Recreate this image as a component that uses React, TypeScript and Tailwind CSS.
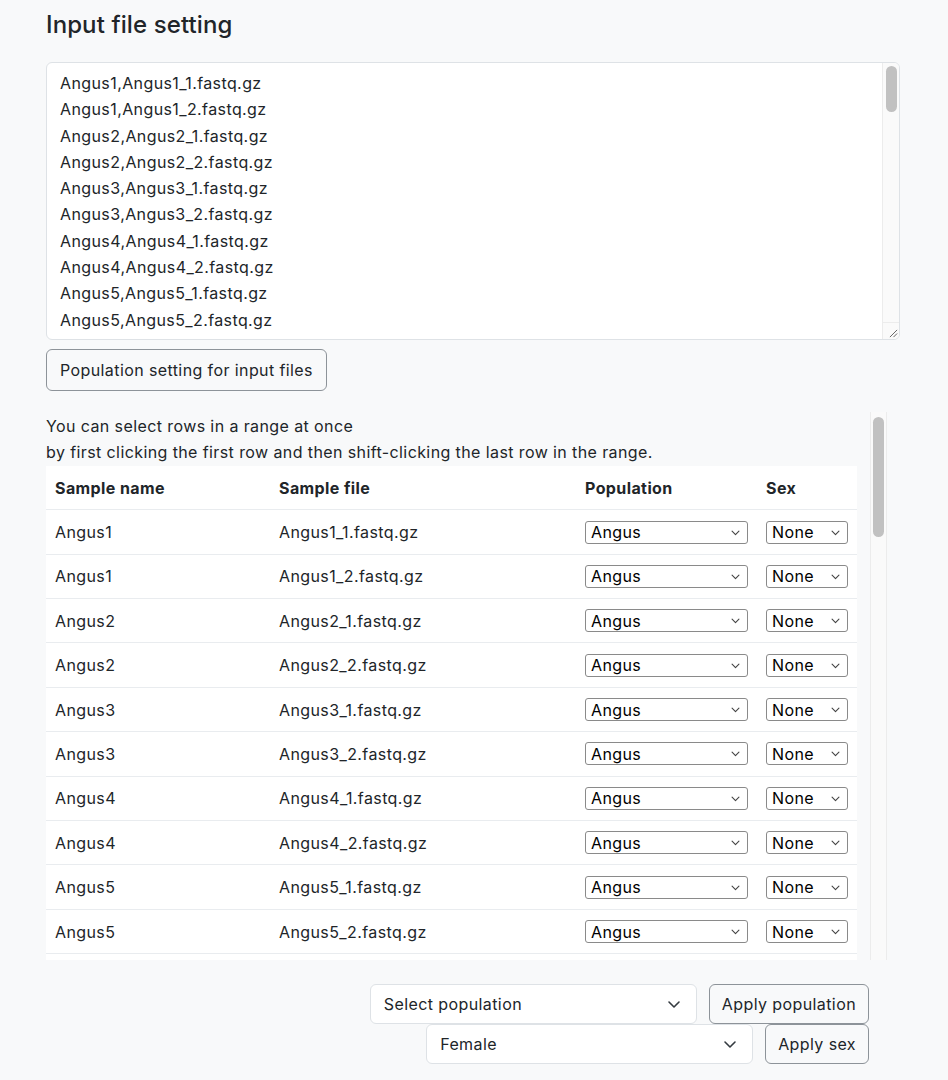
import React from "react";

const files = [1, 2, 3, 4, 5, 6].flatMap((n) => [1, 2].map((r) => ({ name: `Angus${n}`, file: `Angus${n}_${r}.fastq.gz` })));
const visible = files.slice(0, 11);

function Chevron({ className }: { className?: string }) {
  return (
    <svg viewBox="0 0 16 16" className={className} fill="none" stroke="currentColor" strokeWidth="1.6" strokeLinecap="round" strokeLinejoin="round">
      <path d="M3 6l5 5 5-5" />
    </svg>
  );
}

function NativeSelect({ value, width }: { value: string; width: string }) {
  return (
    <div className={`flex h-[23px] items-center justify-between rounded-[3px] border border-[#8a8a8a] bg-white pl-[5px] pr-[6px] text-[16px] leading-none text-black ${width}`}>
      <span>{value}</span>
      <Chevron className="h-[11px] w-[11px] text-[#444]" />
    </div>
  );
}

function Scrollbar({ thumbTop, thumbHeight }: { thumbTop: string; thumbHeight: string }) {
  return (
    <div className="flex w-[17px] shrink-0 flex-col items-center border-x border-[#ececec] bg-[#fafafa]">
      <div className={`${thumbTop} ${thumbHeight} w-[11px] rounded-full bg-[#c1c1c1]`} />
    </div>
  );
}

function InputTextarea() {
  return (
    <div className="flex h-[278px] w-[854px] overflow-hidden rounded-[6px] border border-[#dee2e6] bg-white">
      <div className="flex-1 overflow-hidden px-[13px] pt-[7px] text-[16px] leading-[26.3px] text-[#212529]">
        {visible.map((f) => (
          <div key={f.file}>{f.name},{f.file}</div>
        ))}
      </div>
      <div className="flex w-[17px] shrink-0 flex-col border-l border-[#ececec] bg-[#fafafa]">
        <div className="flex flex-1 justify-center pt-[3px]">
          <div className="h-[46px] w-[11px] rounded-full bg-[#c1c1c1]" />
        </div>
        <div className="flex h-[17px] items-end justify-end border-t border-[#ececec] pb-[1px] pr-[1px]">
          <svg viewBox="0 0 10 10" className="h-[9px] w-[9px]" stroke="#555" strokeWidth="1">
            <path d="M1 9L9 1M5 9L9 5" />
          </svg>
        </div>
      </div>
    </div>
  );
}

function SampleTable() {
  return (
    <div className="mt-[21px] flex h-[548px] w-[841px]">
      <div className="w-[811px] overflow-hidden">
        <p className="pt-[1px] text-[16px] leading-[26.4px] text-[#212529]">
          You can select rows in a range at once
          <br />
          by first clicking the first row and then shift-clicking the last row in the range.
        </p>
        <table className="w-full border-collapse bg-white text-left text-[16px] text-[#212529]">
          <thead>
            <tr className="h-[44px] border-b border-[#e9ecef]">
              <th className="w-[224px] pl-[9px] font-bold">Sample name</th>
              <th className="w-[306px] pl-[9px] font-bold">Sample file</th>
              <th className="w-[181px] pl-[9px] font-bold">Population</th>
              <th className="pl-[9px] font-bold">Sex</th>
            </tr>
          </thead>
          <tbody>
            {visible.map((f) => (
              <tr key={f.file} className="h-[44.4px] border-b border-[#e9ecef]">
                <td className="pl-[9px]">{f.name}</td>
                <td className="pl-[9px]">{f.file}</td>
                <td className="pl-[9px]">
                  <NativeSelect value="Angus" width="w-[163px]" />
                </td>
                <td className="pl-[9px]">
                  <NativeSelect value="None" width="w-[82px]" />
                </td>
              </tr>
            ))}
          </tbody>
        </table>
      </div>
      <div className="w-[13px] shrink-0" />
      <Scrollbar thumbTop="mt-[5px]" thumbHeight="h-[120px]" />
    </div>
  );
}

function ApplyRow({ label, value }: { label: string; value: string }) {
  return (
    <div className="flex items-center justify-end gap-[12px]">
      <div className="flex h-[40px] w-[327px] items-center justify-between rounded-[6px] border border-[#dee2e6] bg-white pl-[13px] pr-[14px] text-[16px] text-[#212529]">
        <span>{value}</span>
        <Chevron className="h-[16px] w-[16px] text-[#343a40]" />
      </div>
      <button className="h-[40px] rounded-[6px] border border-[#8d9399] bg-[#f8f9fa] px-[12px] text-[16px] text-[#212529]">{label}</button>
    </div>
  );
}

export default function App() {
  return (
    <div className="min-h-[1080px] bg-[#f8f9fa] pl-[46px] font-['Inter',_'Liberation_Sans',_sans-serif] tracking-[0.4px] text-[#212529]">
      <h2 className="pt-[9px] text-[24px] font-medium leading-[32px] tracking-[0.1px]">Input file setting</h2>
      <div className="mt-[21px]">
        <InputTextarea />
      </div>
      <button className="mt-[9px] h-[42px] rounded-[6px] border border-[#8d9399] bg-[#f8f9fa] px-[13px] text-[16px] text-[#212529]">
        Population setting for input files
      </button>
      <SampleTable />
      <div className="mt-[24px] flex w-[823px] flex-col">
        <ApplyRow value="Select population" label="Apply population" />
        <ApplyRow value="Female" label="Apply sex" />
      </div>
    </div>
  );
}
